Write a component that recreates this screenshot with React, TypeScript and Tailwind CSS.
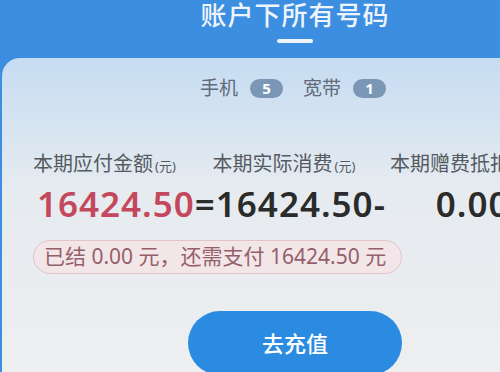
export default function App() {
    return (
        <div className="w-[500px] h-[372px] overflow-hidden bg-[#3b8ee0] font-['Noto_Sans','Noto_Sans_CJK_SC',sans-serif]">
            {/* Header */}
            <div className="h-[58px] flex flex-col items-center pl-[90px]">
                <h1 className="text-[26px] leading-[30px] font-medium text-[#eef4fb] tracking-[1px]">
                    账户下所有号码
                </h1>
                <div className="mt-[9px] w-[36px] h-[4px] rounded-full bg-[#eef4fb]" />
            </div>

            {/* Card */}
            <div className="ml-[2px] w-[540px] h-[330px] rounded-tl-[18px] bg-gradient-to-b from-[#c6dcf2] via-[#e6ebf0] via-40% to-[#eeeff0] pt-[18px]">
                {/* Tabs */}
                <div className="flex items-center h-[24px] pl-[198px] text-[19px] text-[#5f6b78]">
                    <span>手机</span>
                    <span className="ml-[12px] w-[33px] h-[19px] rounded-full bg-[#7a98b6] text-white text-[15px] leading-[19px] font-bold text-center">
                        5
                    </span>
                    <span className="ml-[20px]">宽带</span>
                    <span className="ml-[12px] w-[33px] h-[19px] rounded-full bg-[#7a98b6] text-white text-[15px] leading-[19px] font-bold text-center">
                        1
                    </span>
                </div>

                {/* Labels */}
                <div className="mt-[51px] flex items-center h-[26px] pl-[31px] text-[20px] text-[#555a61] whitespace-nowrap">
                    <span className="w-[182px]">
                        本期应付金额<span className="text-[13px] ml-[2px]">(元)</span>
                    </span>
                    <span className="w-[180px]">
                        本期实际消费<span className="text-[13px] ml-[2px]">(元)</span>
                    </span>
                    <span>本期赠费抵扣(元)</span>
                </div>

                {/* Amounts */}
                <div className="mt-[7px] flex items-center h-[40px] pl-[35px] text-[35px] font-semibold tracking-[1px] whitespace-nowrap">
                    <span className="text-[#c4485c]">16424.50</span>
                    <span className="text-[#2b2b2b]">=16424.50-</span>
                    <span className="ml-[50px] text-[#2b2b2b]">0.00</span>
                </div>

                {/* Status pill */}
                <div className="mt-[16px] ml-[31px] w-[369px] h-[34px] rounded-full border border-[#e0c4ca] bg-[#f3e6e8] flex items-center pl-[10px] text-[21px] text-[#93606a] whitespace-nowrap">
                    已结 0.00 元，还需支付 16424.50 元
                </div>

                {/* Button */}
                <button className="mt-[37px] ml-[186px] w-[214px] h-[64px] rounded-full bg-[#2a8be0] text-white text-[22px] font-medium flex justify-center pt-[16px]">
                    去充值
                </button>
            </div>
        </div>
    );
}
